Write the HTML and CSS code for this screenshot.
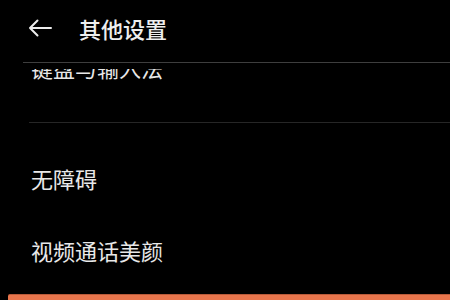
FILE: index.html
```html
<!DOCTYPE html>
<html lang="zh-CN">
<head>
<meta charset="utf-8">
<link rel="stylesheet" href="styles.css">
</head>
<body>
<div class="screen">
  <header class="header">
    <div class="header-row">
      <svg class="back" viewBox="0 0 24 18" width="24" height="18" aria-hidden="true">
        <path d="M23 9H2M9.5 1.5L2 9l7.5 7.5" fill="none" stroke="#ececec" stroke-width="2" stroke-linecap="round" stroke-linejoin="round"/>
      </svg>
      <h1 class="title">其他设置</h1>
    </div>
    <div class="header-line"></div>
  </header>
  <div class="list-viewport">
    <div class="list">
      <div class="item">键盘与输入法</div>
      <div class="group-gap"><div class="divider"></div></div>
      <div class="item">无障碍</div>
      <div class="item">视频通话美颜</div>
    </div>
  </div>
  <div class="bottom-bar"></div>
</div>
</body>
</html>
```

FILE: styles.css
```css
html, body {
  margin: 0;
  padding: 0;
  background: #000;
}
.screen {
  width: 450px;
  height: 300px;
  overflow: hidden;
  background: #000;
  display: flex;
  flex-direction: column;
  font-family: "Noto Sans CJK SC", "Noto Sans", sans-serif;
  color: #e8e8e8;
}
.header {
  flex: none;
  height: 69px;
  display: flex;
  flex-direction: column;
}
.header-row {
  height: 55px;
  display: flex;
  align-items: center;
}
.back {
  display: block;
  margin-left: 28px;
  flex: none;
}
.title {
  margin: 0 0 0 27px;
  font-size: 22px;
  font-weight: 500;
  line-height: 30px;
  color: #eeeeee;
}
.header-line {
  margin-top: 7px;
  margin-left: 23px;
  height: 1px;
  background: #3e3e3e;
}
.list-viewport {
  flex: none;
  height: 225px;
  overflow: hidden;
}
.list {
  margin-top: -38px;
}
.item {
  height: 72px;
  display: flex;
  align-items: center;
  padding-left: 31px;
  font-size: 22px;
  line-height: 30px;
}
.group-gap {
  height: 39px;
  display: flex;
  flex-direction: column;
  justify-content: center;
}
.divider {
  margin-left: 29px;
  height: 1px;
  background: #262626;
}
.bottom-bar {
  flex: none;
  margin-left: 8px;
  height: 6px;
  background: #e8754c;
  border-top: 1px solid #b85a3a;
  border-top-left-radius: 2px;
}
```
